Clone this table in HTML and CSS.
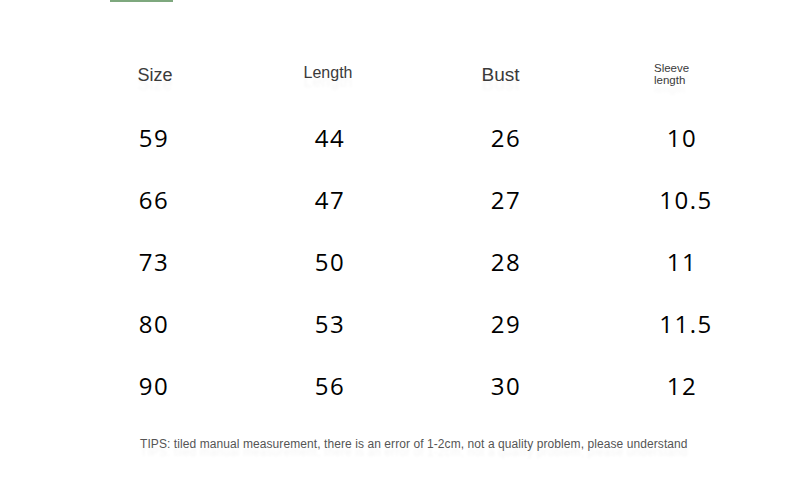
FILE: index.html
```html
<!DOCTYPE html>
<html>
<head>
<meta charset="utf-8">
<link rel="stylesheet" href="styles.css">
</head>
<body>
<div class="page">
  <div class="topbar"></div>
  <div class="chart">
    <div class="head h-size">Size</div>
    <div class="head h-length">Length</div>
    <div class="head h-bust">Bust</div>
    <div class="head h-sleeve">Sleeve<br>length</div>

    <div class="num">59</div><div class="num">44</div><div class="num">26</div><div class="num">10</div>
    <div class="num">66</div><div class="num">47</div><div class="num">27</div><div class="num num-wide">10.5</div>
    <div class="num">73</div><div class="num">50</div><div class="num">28</div><div class="num">11</div>
    <div class="num">80</div><div class="num">53</div><div class="num">29</div><div class="num num-wide">11.5</div>
    <div class="num">90</div><div class="num">56</div><div class="num">30</div><div class="num">12</div>
  </div>
  <p class="tips">TIPS: tiled manual measurement, there is an error of 1-2cm, not a quality problem, please understand</p>
</div>
</body>
</html>
```

FILE: styles.css
```css
html, body {
  margin: 0;
  padding: 0;
  background: #ffffff;
}

.page {
  width: 790px;
  height: 501px;
  position: relative;
  overflow: hidden;
}

.topbar {
  margin-left: 110px;
  width: 63px;
  height: 2px;
  background: #7ea87e;
}

.chart {
  margin-top: 42px;
  margin-left: 66px;
  display: grid;
  grid-template-columns: repeat(4, 176px);
  grid-auto-rows: 62px;
}

.head {
  display: flex;
  align-items: center;
  justify-content: center;
  font-family: "Liberation Sans", Arial, sans-serif;
  color: #3a3a3a;
  text-shadow: 0 9px 3px rgba(0, 0, 0, 0.04);
}

.h-size {
  font-size: 18px;
  padding-left: 2px;
}

.h-length {
  font-size: 16px;
  padding-bottom: 5px;
  padding-right: 4px;
}

.h-bust {
  font-size: 19px;
  padding-right: 11px;
}

.h-sleeve {
  font-size: 11.5px;
  line-height: 12px;
  justify-content: flex-start;
  padding-left: 60px;
  padding-bottom: 2px;
}

.num {
  display: flex;
  align-items: center;
  justify-content: center;
  font-family: "Open Sans", "Noto Sans", sans-serif;
  font-size: 24px;
  letter-spacing: 1.5px;
  color: #000000;
}

.num-wide {
  padding-left: 8px;
}

.tips {
  margin: 21px 0 0 140px;
  font-family: "Liberation Sans", Arial, sans-serif;
  font-size: 12px;
  letter-spacing: 0.08px;
  line-height: 14px;
  color: #555555;
  text-shadow: 0 8px 3px rgba(0, 0, 0, 0.05);
}
```
